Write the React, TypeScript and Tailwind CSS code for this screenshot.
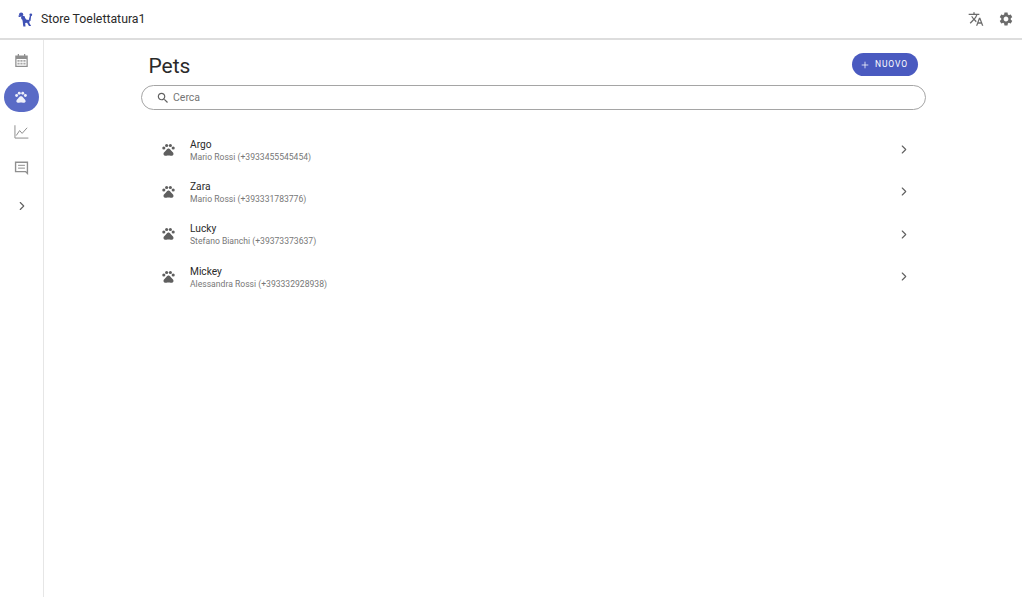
import { ChevronRight, Plus } from 'lucide-react';

interface Pet {
  name: string;
  owner: string;
}

const pets: Pet[] = [
  { name: 'Argo', owner: 'Mario Rossi (+3933455545454)' },
  { name: 'Zara', owner: 'Mario Rossi (+393331783776)' },
  { name: 'Lucky', owner: 'Stefano Bianchi (+39373373637)' },
  { name: 'Mickey', owner: 'Alessandra Rossi (+393332928938)' },
];

const PawIcon = ({ className }: { className: string }) => (
  <svg viewBox="0 0 24 24" fill="currentColor" className={className}>
    <circle cx="4.5" cy="9.5" r="2.5" />
    <circle cx="9" cy="5.5" r="2.5" />
    <circle cx="15" cy="5.5" r="2.5" />
    <circle cx="19.5" cy="9.5" r="2.5" />
    <path d="M17.34 14.86c-.87-1.02-1.6-1.89-2.48-2.91-.46-.54-1.05-1.08-1.75-1.32-.11-.04-.22-.07-.33-.09-.25-.04-.52-.04-.78-.04s-.53 0-.79.05c-.11.02-.22.05-.33.09-.7.24-1.28.78-1.75 1.32-.87 1.02-1.6 1.89-2.48 2.91-1.31 1.31-2.92 2.76-2.62 4.79.29 1.02 1.02 2.03 2.33 2.32.73.15 3.06-.44 5.54-.44h.18c2.48 0 4.81.58 5.54.44 1.31-.29 2.04-1.31 2.33-2.32.31-2.04-1.3-3.49-2.61-4.8z" />
  </svg>
);

const PoodleLogo = () => (
  <svg viewBox="0 0 24 24" fill="#3f51b5" className="h-[15px] w-[15px]">
    <circle cx="5" cy="4" r="3.4" />
    <path d="M1 5l3 1v2H1z" />
    <circle cx="8" cy="9" r="3.2" />
    <path d="M6 8l4-1 3 5 6 1-1 4 3 5.5h-3.4L14.5 17l-3 .5.5 5.5H8.5L7.5 15z" />
    <path d="M17 13l2-7 2 .5-1 8z" />
    <circle cx="20.5" cy="4.5" r="2.2" />
  </svg>
);

const TranslateIcon = () => (
  <svg viewBox="0 0 24 24" fill="#6b6b6b" className="h-[16px] w-[16px]">
    <path d="M12.87 15.07l-2.54-2.51.03-.03c1.74-1.94 2.98-4.17 3.71-6.53H17V4h-7V2H8v2H1v1.99h11.17C11.5 7.92 10.44 9.75 9 11.35 8.07 10.32 7.3 9.19 6.69 8h-2c.73 1.63 1.73 3.17 2.98 4.56l-5.09 5.02L4 19l5-5 3.11 3.11.76-2.04zM18.5 10h-2L12 22h2l1.12-3h4.75L21 22h2l-4.5-12zm-2.62 7l1.62-4.33L19.12 17h-3.24z" />
  </svg>
);

const GearIcon = () => (
  <svg viewBox="0 0 24 24" fill="#6b6b6b" className="h-[16px] w-[16px]">
    <path d="M19.14 12.94c.04-.3.06-.61.06-.94 0-.32-.02-.64-.07-.94l2.03-1.58c.18-.14.23-.41.12-.61l-1.92-3.32c-.12-.22-.37-.29-.59-.22l-2.39.96c-.5-.38-1.03-.7-1.62-.94l-.36-2.54c-.04-.24-.24-.41-.48-.41h-3.84c-.24 0-.43.17-.47.41l-.36 2.54c-.59.24-1.13.57-1.62.94l-2.39-.96c-.22-.08-.47 0-.59.22L2.74 8.87c-.12.21-.08.47.12.61l2.03 1.58c-.05.3-.09.63-.09.94s.02.64.07.94l-2.03 1.58c-.18.14-.23.41-.12.61l1.92 3.32c.12.22.37.29.59.22l2.39-.96c.5.38 1.03.7 1.62.94l.36 2.54c.05.24.24.41.48.41h3.84c.24 0 .44-.17.47-.41l.36-2.54c.59-.24 1.13-.56 1.62-.94l2.39.96c.22.08.47 0 .59-.22l1.92-3.32c.12-.22.07-.47-.12-.61l-2.01-1.58zM12 15.6c-1.98 0-3.6-1.62-3.6-3.6s1.62-3.6 3.6-3.6 3.6 1.62 3.6 3.6-1.62 3.6-3.6 3.6z" />
  </svg>
);

const SearchIcon = () => (
  <svg viewBox="0 0 24 24" fill="#616161" className="h-[14px] w-[14px]">
    <path d="M15.5 14h-.79l-.28-.27C15.41 12.59 16 11.11 16 9.5 16 5.91 13.09 3 9.5 3S3 5.91 3 9.5 5.91 16 9.5 16c1.61 0 3.09-.59 4.23-1.57l.27.28v.79l5 4.99L20.49 19l-4.99-5zm-6 0C7.01 14 5 11.99 5 9.5S7.01 5 9.5 5 14 7.01 14 9.5 11.99 14 9.5 14z" />
  </svg>
);

const CalendarIcon = () => (
  <svg viewBox="0 0 24 24" className="h-[15px] w-[15px]">
    <path
      fill="#8f8f8f"
      fillRule="evenodd"
      d="M2 4h4V1.5h2V4h8V1.5h2V4h4v18.5H2zM4 9.5V20.5h16V9.5z"
    />
    <path
      fill="#a8a8a8"
      d="M5.5 11h3.5v3H5.5zM10.2 11h3.5v3h-3.5zM15 11h3.5v3H15zM5.5 15.5h3.5v3H5.5zM10.2 15.5h3.5v3h-3.5zM15 15.5h3.5v3H15z"
    />
  </svg>
);

const ChartIcon = () => (
  <svg viewBox="0 0 24 24" fill="none" stroke="#8f8f8f" strokeWidth="1.6" className="h-[15px] w-[15px] -translate-y-[1px]">
    <path d="M1.5 2v20.5H23" />
    <path d="M3.5 18.5l5.5-8 4 4.5 8-9" />
  </svg>
);

const CommentIcon = () => (
  <svg viewBox="0 0 24 24" fill="none" stroke="#8f8f8f" className="h-[15px] w-[15px]">
    <path d="M2.5 3.5h19v18l-3-3H2.5z" strokeWidth="2.2" />
    <path d="M6.5 8.5h11M6.5 13h11" strokeWidth="1.6" />
  </svg>
);

const SideItem = ({ children }: { children: React.ReactNode }) => (
  <div className="flex h-[35.7px] w-full items-center justify-center pr-[1px]">{children}</div>
);

const PetRow = ({ name, owner }: Pet) => (
  <div className="flex h-[42.3px] items-center pr-[15.5px] pl-[20px]">
    <PawIcon className="h-[15px] w-[15px] text-[#5f5f5f]" />
    <div className="ml-[14px] flex flex-1 translate-y-[1px] flex-col">
      <span className="text-[10.2px] leading-[14px] text-[#2a2a2a]">{name}</span>
      <span className="text-[8.6px] leading-[11px] text-[#777777]">{owner}</span>
    </div>
    <ChevronRight size={14} strokeWidth={1.9} className="translate-y-[0.5px] text-[#616161]" />
  </div>
);

export default function App() {
  return (
    <div className="flex h-[597px] w-[1024px] flex-col overflow-hidden bg-white font-['Roboto',sans-serif]">
      <header className="mr-[2px] flex h-[40px] shrink-0 items-center justify-between border-b-2 border-[#dddddd] pr-[8px] pl-[18px]">
        <div className="flex items-center gap-[8px]">
          <PoodleLogo />
          <span className="text-[12.3px] text-[#2a2a2a]">Store Toelettatura1</span>
        </div>
        <div className="flex items-center gap-[14px]">
          <TranslateIcon />
          <GearIcon />
        </div>
      </header>

      <div className="flex flex-1">
        <aside className="flex w-[44px] shrink-0 flex-col items-center border-r border-[#e6e6e6] pt-[3px]">
          <SideItem>
            <CalendarIcon />
          </SideItem>
          <SideItem>
            <div className="flex h-[30px] w-[35px] items-center justify-center rounded-full bg-[#5a6bc6]">
              <PawIcon className="h-[14px] w-[14px] text-[#eef0fa]" />
            </div>
          </SideItem>
          <SideItem>
            <ChartIcon />
          </SideItem>
          <SideItem>
            <CommentIcon />
          </SideItem>
          <div className="flex h-[40px] w-full items-center justify-center">
            <ChevronRight size={14} strokeWidth={1.9} className="text-[#616161]" />
          </div>
        </aside>

        <main className="flex-1 pt-[13px] pr-[98px] pl-[97px]">
          <div className="flex h-[32px] items-start justify-between pr-[8px] pl-[7.5px]">
            <h1 className="text-[21px] leading-[26px] text-[#2a2a2a]">Pets</h1>
            <button className="flex h-[23px] w-[66px] items-center justify-center gap-[5px] rounded-full bg-[#4a5ac0] pr-[2px] text-[8.5px] tracking-[0.1em] text-white">
              <Plus size={10} strokeWidth={1.8} />
              NUOVO
            </button>
          </div>
          <div className="flex h-[25px] items-center gap-[3px] rounded-full border border-[#a5a5a5] pl-[14px]">
            <SearchIcon />
            <span className="text-[10.5px] text-[#757575]">Cerca</span>
          </div>
          <div className="mt-[18px]">
            {pets.map((pet) => (
              <PetRow key={pet.name} {...pet} />
            ))}
          </div>
        </main>
      </div>
    </div>
  );
}
